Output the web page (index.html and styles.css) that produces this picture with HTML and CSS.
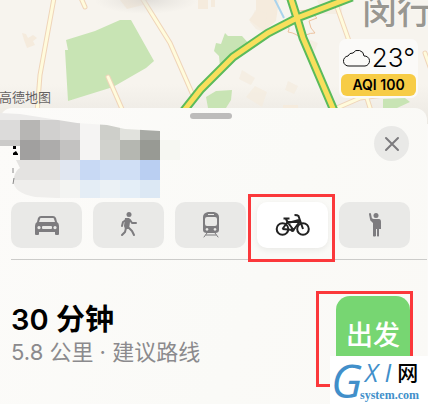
FILE: index.html
```html
<!DOCTYPE html>
<html lang="zh-CN">
<head>
<meta charset="utf-8">
<meta name="viewport" content="width=device-width, initial-scale=1">
<title>路线</title>
<link rel="stylesheet" href="styles.css">
</head>
<body>
<main class="app">
  <section class="map" aria-label="地图">
    <svg class="map-art" viewBox="0 0 428 124" preserveAspectRatio="xMidYMin slice" aria-hidden="true">
      <defs>
        <radialGradient id="shade"><stop offset="0" stop-color="#d6d3cf" stop-opacity=".7"/><stop offset="1" stop-color="#dedbd6" stop-opacity="0"/></radialGradient>
        <linearGradient id="base" x2="0" y2="1"><stop offset=".68" stop-color="#f7f4ee"/><stop offset="1" stop-color="#ebe8e2"/></linearGradient>
      </defs>
      <rect width="428" height="124" fill="url(#base)"/>
      <g fill="#f5ebdd">
        <path d="M22 33l4 1 2 4 5-3 4 3-4 3 2 4-8 3-3-8zM120 0h28l-5 5-16 4zM198 0h10v9h-10zM211 0h4v7h-4zM256 0h23l-3 21-12 10-15-11 7-9z"/>
        <path d="M250 22l5-12 12 3-3 19-8-3zM242 70l13 8-4 7-12-6zM255 86l12 6-5 15-16-10zM288 81l10 5-4 8-9-4zM317 0h25v14h-20zM306 38l12 5-5 12-9-5z" opacity=".65"/>
        <path d="M283 105h15v5h-15z"/>
      </g>
      <g fill="#c8e4b4">
        <path d="M66 40l29-9 25-11h11l23 41-8 7-33 19-45 14-3-51h3z"/>
        <path d="M216 43l5 1 4-11 3 3 14 0 8 9-6 6-24 16-1-11-5-5zM206 97l10-6 16-1-1 10-5 8-18 0zM383 99l22-1 5 4-13 6-14 0zM68 98h4v2h-4z"/>
      </g>
      <path d="M274-2l10 20" stroke="#a9d3ed" stroke-width="2"/>
      <g fill="none" stroke="#efd4b9" stroke-width="5" stroke-linecap="round">
        <path d="M54-2L40 75l-3 38M81-2l4 9M108 77l14 32M142-2l28 45 22 50M337 7l12 34 22 70M425 53l10 28M330 111l30-13 24-3"/>
      </g>
      <g fill="none" stroke="#fffbdc" stroke-width="3" stroke-linecap="round">
        <path d="M54-2L40 75l-3 38M81-2l4 9M108 77l14 32M142-2l28 45 22 50M337 7l12 34 22 70M425 53l10 28M330 111l30-13 24-3"/>
      </g>
      <path d="M285 23q8-2 8-13 6 2 15 0l9 8-8 3q1 8 6 12-10 0-13 7-5-7-14-8 3-5-3-9z" fill="none" stroke="#edc3a0"/>
      <g fill="none" stroke="#5bbb5b" stroke-width="9">
        <path d="M182 113l19-24 32-32 35-24 29-15 55-21M290-4l7 22 6 20 32 75"/>
      </g>
      <g fill="none" stroke="#f8df5c" stroke-width="5">
        <path d="M182 113l19-24 32-32 35-24 29-15 55-21M290-4l7 22 6 20 32 75"/>
      </g>
      <ellipse cx="146" cy="0" rx="52" ry="14" fill="url(#shade)"/>
    </svg>
    <span class="district">闵行</span>
    <span class="provider">高德地图</span>
    <div class="weather">
      <div class="temperature">
        <svg class="cloud" viewBox="0 0 28 20" aria-hidden="true"><path d="M7 18a5 5 0 0 1-1-10 5 5 0 0 1 5-3 6 6 0 0 1 11 3 5 5 0 0 1 1 10z"/></svg>
        <span>23°</span>
      </div>
      <div class="air">AQI 100</div>
    </div>
  </section>

  <section class="sheet" aria-label="路线方案">
    <header class="sheet-head">
      <span class="grabber"></span>
      <svg class="mosaic" viewBox="0 0 184 90" aria-hidden="true">
        <defs><clipPath id="edge"><path d="M0 5l20 1 57 9 30 2 18 4 35 2 20 9v57l-20 4-60-1-65-3q-25-5-21-20 2-7 6-9l-5-10H0z"/></clipPath></defs>
        <g clip-path="url(#edge)">
          <path fill="#ecebea" d="M0 0h80v12H0z"/>
          <path fill="#dcdbda" d="M0 12h20v20H0z"/><path fill="#b7b6b4" d="M20 12h20v20H20z"/>
          <path fill="#d1d0cf" d="M40 12h20v20H40z"/><path fill="#d7d6d5" d="M60 12h20v20H60z"/>
          <path fill="#f5f4f3" d="M80 12h20v40H80z"/><path fill="#cecfca" d="M100 12h20v20h-20z"/>
          <path fill="#e1e2dd" d="M120 12h20v20h-20z"/><path fill="#a8aaa5" d="M140 12h20v20h-20z"/>
          <path fill="#cbcac9" d="M0 32h20v6H0z"/><path fill="#a1a09f" d="M20 32h20v20H20z"/>
          <path fill="#adacab" d="M40 32h20v20H40z"/><path fill="#c3c2c1" d="M60 32h20v20H60z"/>
          <path fill="#d1d2cd" d="M100 32h20v20h-20z"/><path fill="#b5b7b1" d="M120 32h20v20h-20z"/>
          <path fill="#989a94" d="M140 32h20v20h-20z"/><path fill="#f6f7f2" d="M160 32h20v20h-20z"/>
          <path fill="#e4e3e1" d="M0 52h60v20H0z"/><path fill="#e1e7f1" d="M60 52h20v20H60z"/>
          <path fill="#c8d9f4" d="M80 52h20v20H80z"/><path fill="#d0dff5" d="M100 52h40v20h-40z"/>
          <path fill="#bacff2" d="M140 52h20v20h-20z"/>
          <path fill="#efeeec" d="M0 72h60v20H0z"/><path fill="#f3f4f2" d="M60 72h20v20H60z"/>
          <path fill="#e4edf5" d="M80 72h20v20H80z"/><path fill="#ebf1f5" d="M100 72h20v20h-20z"/>
          <path fill="#e4eef7" d="M120 72h20v20h-20z"/><path fill="#dce8f4" d="M140 72h20v20h-20z"/>
        </g>
        <path d="M13 38h3v3h-3zM13 45l3-2 2 3v1h-5z"/><path d="M13 60v5M14 70l-1 6" stroke="#888"/>
      </svg>
      <button class="close" type="button" aria-label="关闭"><svg viewBox="0 0 16 16" aria-hidden="true"><path d="M2 2l12 12M14 2L2 14"/></svg></button>
    </header>

    <nav class="modes" aria-label="出行方式">
      <button class="mode" type="button" aria-label="驾车">
        <svg viewBox="0 0 28 28" aria-hidden="true"><path fill-rule="evenodd" d="M8 5h12q2 0 3 2l1 4q2 1 2 4v8q0 1-1 1h-2q-1 0-1-1v-2H6v2q0 1-1 1H3q-1 0-1-1v-8q0-3 2-4l1-4q1-2 3-2zm0 2q-1 0-1 1l-1 3h16l-1-3q0-1-1-1zM6 15a1.600 1.600 0 1 0 .01 0zM22 15a1.600 1.600 0 1 0 .01 0zM10 15q-1 0-1 1v1q0 1 1 1h8q1 0 1-1v-1q0-1-1-1z"/></svg>
      </button>
      <button class="mode" type="button" aria-label="步行">
        <svg viewBox="0 0 28 28" aria-hidden="true"><circle cx="14" cy="3.500" r="2.500"/><path class="line" d="M11 9l-3 2-1 4M15 9l2 3h4M11 17l-1 4-3 3M14 17l3 3 2 4"/><path d="M10 7h4q2 1 1 4l-1 7h-4l-1-3z"/></svg>
      </button>
      <button class="mode" type="button" aria-label="公共交通">
        <svg viewBox="0 0 28 28" aria-hidden="true"><path fill-rule="evenodd" d="M11 1h6q5 1 5 5v13q0 3-4 3h-8q-4 0-4-3V6q0-4 5-5zm0 2v1h6V3zM10 6q-2 0-2 2v5q0 2 2 2h8q2 0 2-2V8q0-2-2-2zM10 17a1.400 1.400 0 1 0 .01 0zM18 17a1.400 1.400 0 1 0 .01 0z"/><path class="thin" d="M10 22l-3 4M18 22l3 4M9 24h10"/></svg>
      </button>
      <button class="mode selected" type="button" aria-label="骑行" aria-pressed="true">
        <svg class="bike" viewBox="0 0 36 26" aria-hidden="true"><circle cx="7.500" cy="17" r="5.800"/><circle cx="28" cy="17" r="5.800"/><path d="M7.500 17l5-7h12l-6 8-6-8M13 11l-2-4M8.500 6.500h6M18 18L7.500 17M28 17L23.500 4q-1-1-4-1M13 11l11-3"/><circle cx="17.500" cy="18" r="1"/></svg>
      </button>
      <button class="mode" type="button" aria-label="打车">
        <svg viewBox="0 0 28 28" aria-hidden="true"><circle cx="15" cy="4.500" r="2.500"/><path class="line" d="M9 3l1 5 4 2"/><path d="M12 8h6q2 0 2 3v7h-2v7q-1 1-2 0v-7h-1v7q-2 1-3 0V12l-3-3z"/></svg>
      </button>
    </nav>

    <div class="route">
      <div class="details">
        <h1>30 分钟</h1>
        <p>5.8 公里 · 建议路线</p>
      </div>
      <div class="go-frame"><button class="go" type="button">出发</button></div>
    </div>
  </section>
  <div class="stamp">
    <span class="stamp-g">G</span>
    <div class="stamp-copy"><div class="stamp-top"><i>X I</i><b>网</b></div><span class="stamp-url">system.com</span></div>
  </div>
</main>
</body>
</html>
```

FILE: styles.css
```css
* { box-sizing: border-box; }
body { margin: 0; background: #fbfaf8; color: #000; font-family: Inter, "Noto Sans CJK SC", sans-serif; }
button { font: inherit; padding: 0; border: 0; }
.app { position: relative; display: flex; flex-direction: column; min-height: 100vh; overflow: hidden; }
.map { position: relative; height: 108px; background: #f7f4ee; }
.map-art { display: block; width: 100%; height: 124px; }
.district { position: absolute; top: -12px; right: -4px; color: #999791; font-size: 35px; font-weight: 500; line-height: 46px; text-shadow: 0 0 2px #fff; }
.provider { position: absolute; left: -1px; bottom: 3px; color: #65615f; font-size: 13px; line-height: 16px; text-shadow: 0 0 1px #fff; }
.weather { position: absolute; top: 39px; right: 10px; width: 79px; padding: 2px; border-radius: 7px; background: #fbfaf8; }
.temperature { display: flex; align-items: center; justify-content: space-between; height: 33px; padding: 0 1px; font-size: 26px; font-weight: 300; line-height: 33px; }
.cloud { width: 28px; height: 20px; fill: none; stroke: #111; }
.air { border-radius: 6px; background: #f7cc46; font-size: 14px; font-weight: 600; line-height: 22px; text-align: center; }
.sheet { position: relative; flex: 1; margin-right: 1px; border-radius: 12px 12px 0 0; background: linear-gradient(110deg, #fcfbf9, #fafaf7 60%, #faf9f6); }
.sheet-head { position: relative; display: flex; align-items: flex-start; justify-content: space-between; height: 94px; padding-right: 18px; }
.grabber { position: absolute; top: 5px; left: calc(50% - 24px); width: 42px; height: 6px; border-radius: 3px; background: #bdbcbb; }
.mosaic { width: 184px; height: 90px; }
.close { display: grid; place-items: center; width: 35px; height: 35px; margin-top: 18px; border-radius: 50%; background: #e9e9e7; }
.close svg { width: 16px; height: 16px; fill: none; stroke: #7c7b7e; stroke-width: 2; stroke-linecap: round; }
.modes { display: grid; grid-template-columns: repeat(5, 1fr); gap: 11px; margin-left: 11px; padding: 0 17px 11px 0; border-bottom: 1px solid #ccccca; }
.mode { position: relative; display: grid; place-items: center; height: 46px; border-radius: 10px; background: #e9e9e7; }
.mode svg { width: 28px; height: 28px; fill: #7d7c7f; }
.mode .line, .mode .thin { fill: none; stroke: #7d7c7f; stroke-width: 2; stroke-linecap: round; stroke-linejoin: round; }
.mode .thin { stroke-width: 1; }
.selected { background: #fff; box-shadow: 0 2px 6px #00000012; }
.selected::after { content: ""; position: absolute; inset: -8px -7px -14px -9px; border: 3px solid #fb383b; }
.mode .bike { width: 36px; height: 26px; fill: none; stroke: #222; stroke-width: 2; stroke-linejoin: round; }
.route { display: flex; align-items: flex-start; justify-content: space-between; padding: 31px 14px 0 11px; }
.details { padding-top: 11px; }
h1 { margin: 0; font-size: 29px; font-weight: 600; line-height: 36px; }
p { margin: 0; color: #8b8a8d; font-size: 22px; line-height: 28px; }
.go-frame { width: 97px; height: 96px; padding: 2px 0 0 17px; border: 3px solid #fb383b; }
.go { width: 100%; height: 74px; border-radius: 14px; background: #77d672; color: #fff; font-size: 27px; font-weight: 500; }
.stamp { position: absolute; right: 0; bottom: 0; display: flex; width: 98px; height: 48px; padding-left: 1px; background: #fff; color: #418fca; }
.stamp-g { width: 29px; font-family: "Open Sans", sans-serif; font-size: 46px; font-style: italic; font-weight: 500; line-height: 48px; }
.stamp-top { display: flex; align-items: center; gap: 6px; height: 33px; padding: 0 0 0 5px; font-family: "Open Sans", "Noto Sans CJK SC", sans-serif; font-size: 25px; line-height: 33px; }
.stamp-top i { font-weight: 500; }
.stamp-top b { color: #000; font-size: 21px; font-weight: 500; }
.stamp-url { display: block; font-family: "Liberation Serif", serif; font-size: 12px; font-weight: 700; line-height: 13px; }
```
